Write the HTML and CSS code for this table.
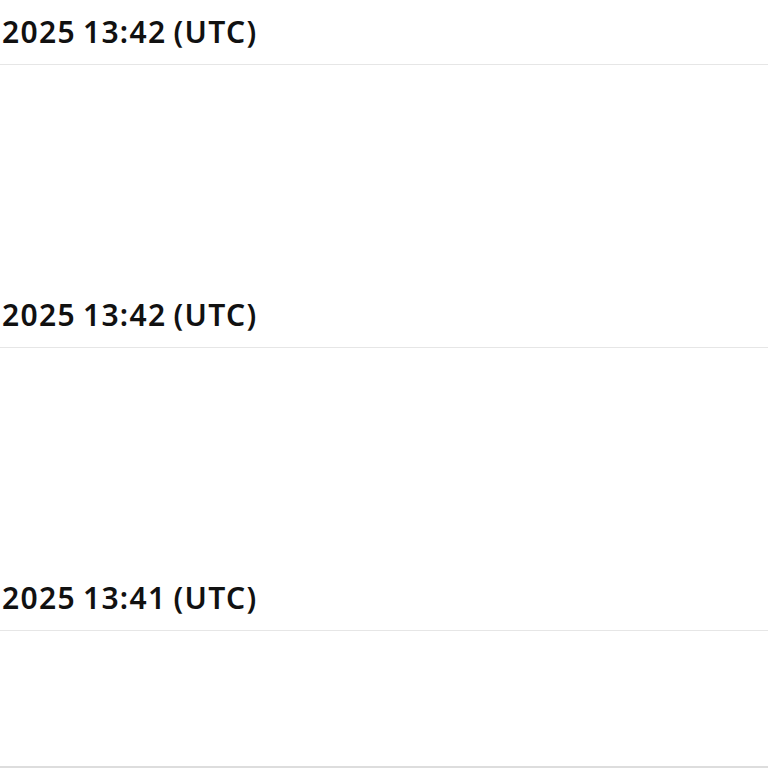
FILE: index.html
```html
<!DOCTYPE html>
<html>
<head>
<meta charset="utf-8">
<link rel="stylesheet" href="styles.css">
</head>
<body>
<div class="list">
  <section class="entry">
    <div class="entry-head"><span class="stamp">2025 13:42 (UTC)</span></div>
    <div class="entry-body"></div>
  </section>
  <section class="entry">
    <div class="entry-head"><span class="stamp">2025 13:42 (UTC)</span></div>
    <div class="entry-body"></div>
  </section>
  <section class="entry">
    <div class="entry-head"><span class="stamp">2025 13:41 (UTC)</span></div>
    <div class="entry-body entry-body-last"></div>
  </section>
</div>
</body>
</html>
```
FILE: styles.css
```css
html, body {
  margin: 0;
  padding: 0;
  background: #ffffff;
}
body {
  font-family: "Noto Sans", sans-serif;
  color: #111111;
  overflow: hidden;
  height: 768px;
}
.list {
  display: flex;
  flex-direction: column;
}
.entry-head {
  height: 65px;
  box-sizing: border-box;
  padding: 12px 0 0 2px;
  border-bottom: 1px solid #e6e6e6;
  display: flex;
  align-items: flex-start;
}
.stamp {
  font-size: 30px;
  font-weight: 600;
  line-height: 40px;
  letter-spacing: 1.3px;
  word-spacing: -2px;
  white-space: nowrap;
}
.entry-body {
  height: 218px;
}
.entry-body-last {
  height: 135px;
  border-bottom: 2px solid #dddddd;
}
```
